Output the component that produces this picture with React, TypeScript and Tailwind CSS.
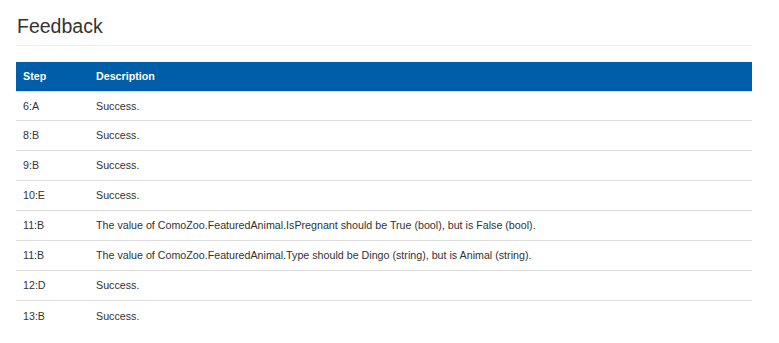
const rows: [string, string][] = [
  ["6:A", "Success."],
  ["8:B", "Success."],
  ["9:B", "Success."],
  ["10:E", "Success."],
  ["11:B", "The value of ComoZoo.FeaturedAnimal.IsPregnant should be True (bool), but is False (bool)."],
  ["11:B", "The value of ComoZoo.FeaturedAnimal.Type should be Dingo (string), but is Animal (string)."],
  ["12:D", "Success."],
  ["13:B", "Success."],
];

export default function App() {
  return (
    <div className="min-h-screen bg-white px-4 pt-[15px] font-['Liberation_Sans',Arial,sans-serif] text-[#333]">
      <div className="w-[736px]">
        <h1 className="border-b border-[#eee] pb-[8px] pl-px text-[19.5px] leading-[22px] font-normal">Feedback</h1>

        <div className="mt-4 text-[10.7px]">
          {/* header bar */}
          <div className="flex h-[30px] items-center border-b border-[#d6e2ee] bg-[#005da8] font-bold text-white">
            <div className="w-[73px] pl-[7px]">Step</div>
            <div className="pl-[7px]">Description</div>
          </div>

          {rows.map(([step, desc], i) => (
            <div
              key={i}
              className={`flex items-center ${i === 0 ? "h-[29px]" : "h-[30px]"} ${
                i < rows.length - 1 ? "border-b border-[#ddd]" : ""
              }`}
            >
              <div className="w-[73px] pl-[7px]">{step}</div>
              <div className="pl-[7px]">{desc}</div>
            </div>
          ))}
        </div>
      </div>
    </div>
  );
}
